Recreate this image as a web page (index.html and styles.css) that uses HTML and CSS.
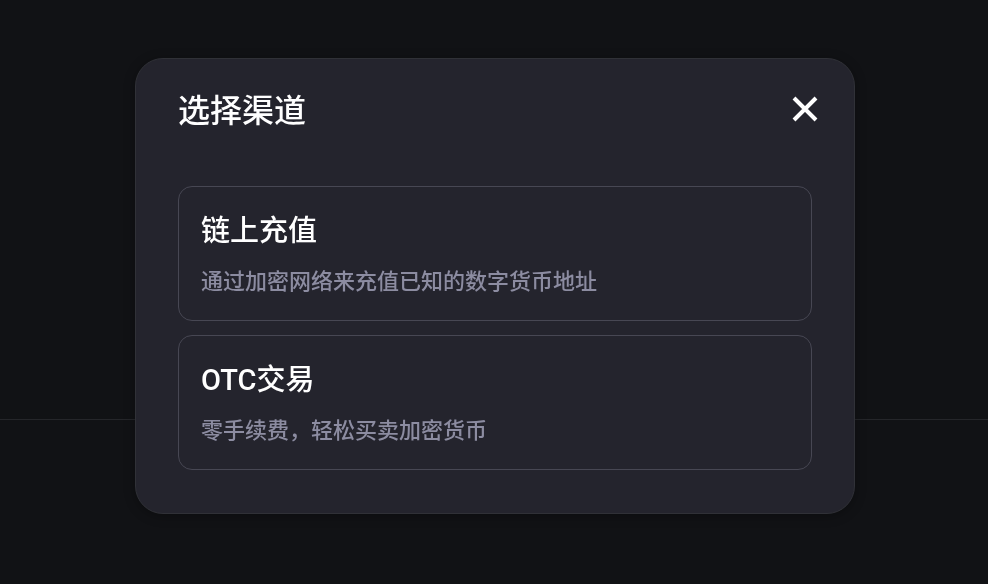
FILE: index.html
```html
<!DOCTYPE html>
<html lang="zh-CN">
<head>
    <meta charset="UTF-8">
    <meta name="viewport" content="width=device-width, initial-scale=1.0">
    <title>选择渠道</title>
    <link rel="stylesheet" href="styles.css">
</head>
<body>
    <div class="page-top"></div>
    <div class="overlay">
        <div class="modal" role="dialog" aria-modal="true" aria-labelledby="modal-title">
            <div class="modal-header">
                <h1 id="modal-title">选择渠道</h1>
                <button class="close" type="button" aria-label="关闭">
                    <svg width="26" height="26" viewBox="0 0 26 26" fill="none" stroke="#fff" stroke-width="4">
                        <path d="M2 2L24 24M24 2L2 24"/>
                    </svg>
                </button>
            </div>
            <div class="channels">
                <button class="channel" type="button">
                    <span class="channel-name">链上充值</span>
                    <span class="channel-desc">通过加密网络来充值已知的数字货币地址</span>
                </button>
                <button class="channel" type="button">
                    <span class="channel-name">OTC交易</span>
                    <span class="channel-desc">零手续费，轻松买卖加密货币</span>
                </button>
            </div>
        </div>
    </div>
</body>
</html>
```

FILE: styles.css
```css
* {
    box-sizing: border-box;
}
body {
    margin: 0;
    min-height: 100vh;
    background-color: #111215;
    color: #fff;
    font-family: Roboto, "Noto Sans CJK SC", sans-serif;
}
button {
    font-family: inherit;
    color: inherit;
    background: none;
    cursor: pointer;
}
.page-top {
    height: 420px;
    border-bottom: 1px solid #25262a;
}
/* modal over the page */
.overlay {
    position: fixed;
    inset: 0;
    display: flex;
    align-items: center;
    justify-content: center;
    padding: 0 0 12px 2px;
}
.modal {
    width: 720px;
    max-width: 100%;
    padding: 28px 42px 43px;
    background-color: #24242d;
    border: 1px solid #303137;
    border-radius: 28px;
    box-shadow: 0 2px 12px rgba(0, 0, 0, 0.3);
}
.modal-header {
    display: flex;
    align-items: center;
    justify-content: space-between;
    margin-bottom: 51px;
}
.modal-header h1 {
    margin: 0;
    font-size: 32px;
    line-height: 48px;
    font-weight: 500;
}
.close {
    display: flex;
    margin: 0 -10px 5px 0;
    padding: 4px;
    border: none;
}
.channels {
    display: flex;
    flex-direction: column;
    gap: 14px;
}
.channel {
    display: flex;
    flex-direction: column;
    gap: 12px;
    padding: 23px 22px 20px;
    border: 1px solid #474753;
    border-radius: 14px;
    text-align: left;
}
.channel-name {
    font-size: 29px;
    line-height: 42px;
    font-weight: 500;
}
.channel-desc {
    font-size: 22px;
    line-height: 36px;
    font-weight: 500;
    color: #8c8ca1;
}
```
